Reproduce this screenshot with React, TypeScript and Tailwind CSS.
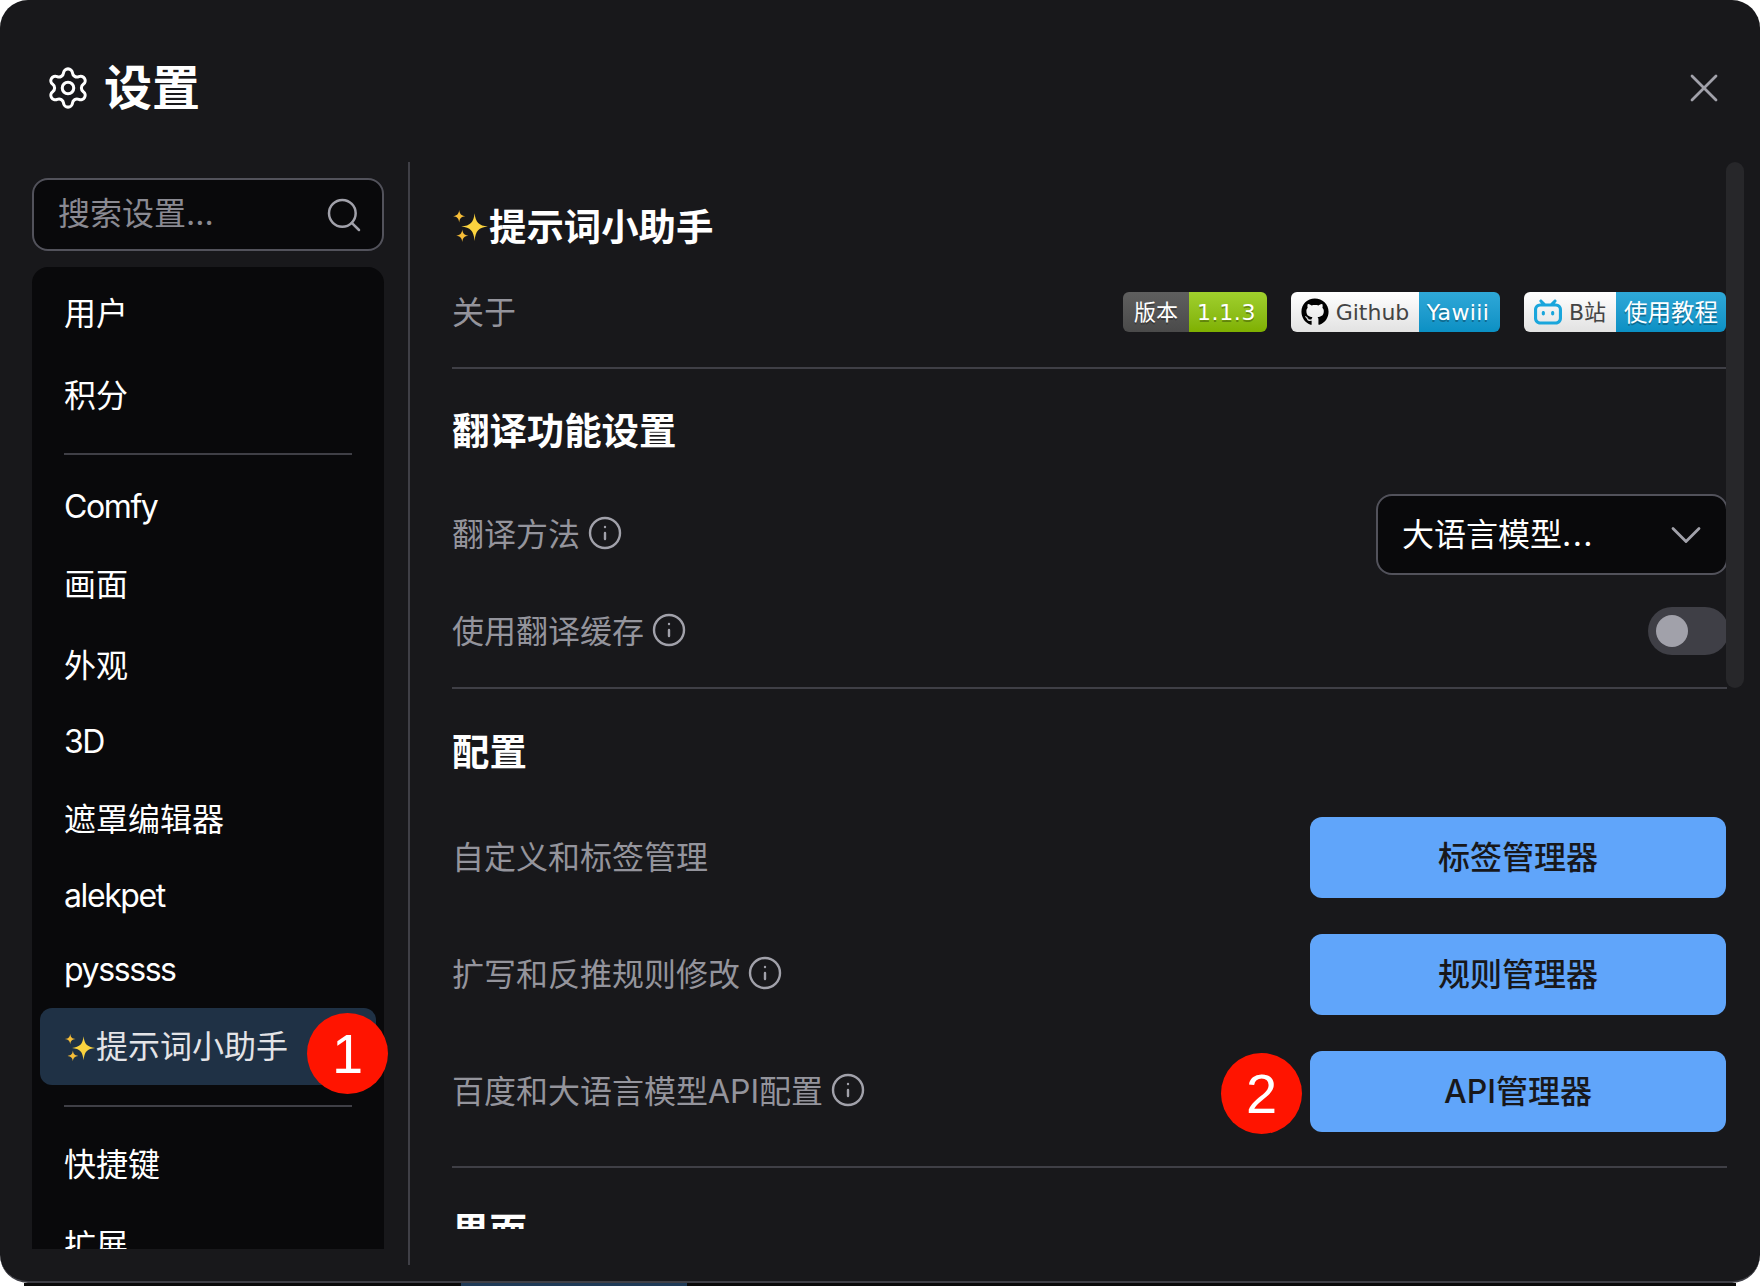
import React from 'react';
import { ChevronDown, Info, Search, Settings, X } from 'lucide-react';
import { FaGithub } from 'react-icons/fa';
import { SiBilibili } from 'react-icons/si';

const sparkles = (size: string) => (
  <svg viewBox="0 0 36 36" className={`${size} shrink-0`}>
    <path d="M22 6 C23 15 26 18 35 19 C26 20 23 23 22 33 C21 23 18 20 9 19 C18 18 21 15 22 6Z" fill="#fbd33f" />
    <path d="M7 3 C7.5 7 9 8.5 13 9 C9 9.5 7.5 11 7 15 C6.5 11 5 9.5 1 9 C5 8.5 6.5 7 7 3Z" fill="#f6bd38" />
    <path d="M10 22 C10.500 26 12 27.500 16 28 C12 28.500 10.500 30 10 34 C9.500 30 8 28.500 4 28 C8 27.500 9.500 26 10 22Z" fill="#f6bd38" />
  </svg>
);

const navItem = 'flex items-center px-8 text-[32px] text-white';
const navLatin = 'flex items-center px-8 text-[32px] tracking-[-1.4px] text-white';

const Divider = () => <div className="h-[2px] bg-[#3f3f46]" />;

const SectionTitle = ({ className, children }: { className: string; children: React.ReactNode }) => (
  <div className={`flex h-20 items-center pt-[2px] text-[37.4px] font-bold text-white ${className}`}>{children}</div>
);

const Label = ({ text, info }: { text: string; info?: boolean }) => (
  <div className="flex items-center gap-[10px] text-[32px] text-[#94949c]">
    <span>{text}</span>
    {info && <Info size={36} strokeWidth={1.6} className="-mx-[3px] -mt-[4px] text-[#a1a1aa]" />}
  </div>
);

const ActionRow = ({ label, info, button, className }: { label: string; info?: boolean; button: string; className: string }) => (
  <div className={`flex h-[81px] items-center justify-between pr-[1px] ${className}`}>
    <Label text={label} info={info} />
    <button className="h-full w-[416px] rounded-xl bg-[#60a5fa] text-[32px] font-medium text-[#18181b]">{button}</button>
  </div>
);

const shadow = '[text-shadow:0_2px_0_rgba(0,0,0,0.28)]';

const Badge = ({ left, right, leftW, rightW, icon, light, rightClass }: { left: string; right: string; leftW: string; rightW: string; icon?: React.ReactNode; light?: boolean; rightClass: string }) => (
  <div className="flex h-10 overflow-hidden rounded-md font-['DejaVu_Sans','Noto_Sans_CJK_SC',sans-serif] text-[22px]">
    <div className={`flex items-center justify-center gap-[7px] ${leftW} ${light ? 'bg-linear-to-b from-white to-[#e2e2e2] text-[#444]' : `bg-linear-to-b from-[#5f5f5f] to-[#4a4a4a] text-white ${shadow}`}`}>
      {icon}
      <span>{left}</span>
    </div>
    <div className={`flex items-center justify-center text-white ${shadow} ${rightW} ${rightClass} ${light ? 'bg-linear-to-b from-[#2ea8d8] to-[#0a90c4]' : 'bg-linear-to-b from-[#a0d02c] to-[#7fb000]'}`}>
      {right}
    </div>
  </div>
);

const Marker = ({ n, className }: { n: string; className: string }) => (
  <div className={`absolute flex h-[81px] w-[81px] items-center justify-center rounded-full bg-[#ff1400] font-['Liberation_Sans',sans-serif] text-[56px] text-white ${className}`}>
    {n}
  </div>
);

export default function App() {
  return (
    <div className="relative h-[1286px] w-[1760px] overflow-hidden bg-white font-['Inter','Noto_Sans_CJK_SC',sans-serif]">
      <div className="flex h-[1283px] flex-col rounded-[28px] border-b-2 border-[#3f3f46] bg-[#18181b]">
        <header className="flex h-[162px] shrink-0 items-center justify-between pt-[14px] pl-[45px] pr-[32px]">
          <div className="flex items-center gap-[13px]">
            <Settings size={46} strokeWidth={1.6} className="text-white" />
            <h1 className="text-[48px] font-bold text-white">设置</h1>
          </div>
          <X size={48} strokeWidth={1.4} className="text-[#a1a1aa]" />
        </header>

        <div className="flex h-[1103px] shrink-0">
          <aside className="flex w-[410px] shrink-0 flex-col border-r-2 border-[#3f3f46] pl-8 pr-6 pt-4">
            <div className="flex h-[73px] shrink-0 items-center justify-between rounded-2xl border-2 border-[#52525b] bg-[#09090b] pl-[24px] pr-[18px] text-[32px] text-[#8a8a92]">
              <span className="-mt-[2px]">搜索设置...</span>
              <Search size={40} strokeWidth={1.5} className="text-[#a1a1aa]" />
            </div>
            <nav className="mt-4 mb-4 h-[982px] shrink-0 overflow-hidden rounded-t-2xl bg-[#09090b] pt-[6px]">
              <div className={`${navItem} h-[82px]`}>用户</div>
              <div className={`${navItem} h-[82px]`}>积分</div>
              <div className="mx-8 mt-4 h-[2px] bg-[#3f3f46]" />
              <div className={`${navLatin} mt-[15px] h-[74px]`}>Comfy</div>
              <div className={`${navItem} h-[82px]`}>画面</div>
              <div className={`${navItem} h-20`}>外观</div>
              <div className={`${navLatin} h-[72px]`}>3D</div>
              <div className={`${navItem} mt-[1px] h-[82px]`}>遮罩编辑器</div>
              <div className={`${navLatin} h-[70px]`}>alekpet</div>
              <div className={`${navLatin} h-[77px]`}>pysssss</div>
              <div className="mx-2 flex h-[77px] items-center rounded-xl bg-[#1f3145] pl-6 text-[32px] text-[#e4e4e7]">
                {sparkles('h-8 w-8')}
                <span>提示词小助手</span>
              </div>
              <div className="mx-8 mt-5 h-[2px] bg-[#3f3f46]" />
              <div className={`${navItem} mt-[17px] h-[82px]`}>快捷键</div>
              <div className={`${navItem} h-[80px]`}>扩展</div>
            </nav>
          </aside>

          <main className="ml-[42px] h-[1067px] w-[1275px] overflow-hidden">
            <SectionTitle className="mt-5 h-[90px]">
              {sparkles('-mt-[6px] h-[37px] w-[37px]')}
              <span>提示词小助手</span>
            </SectionTitle>
            <div className="flex h-20 items-center justify-between pt-[2px] pr-[1px]">
              <Label text="关于" />
              <div className="-mt-[2px] flex items-center gap-6">
                <Badge left="版本" right="1.1.3" leftW="w-[66px]" rightW="w-[78px]" rightClass="pr-[3px] tracking-[0.6px]" />
                <Badge light left="Github" right="Yawiii" leftW="w-[128px]" rightW="w-[81px]" rightClass="pr-[3px] tracking-[0.4px]" icon={<FaGithub size={28} className="text-black" />} />
                <Badge light left="B站" right="使用教程" leftW="w-[92px]" rightW="w-[110px]" rightClass="pt-[3px] text-[23.500px]" icon={<SiBilibili size={28} className="text-[#1aa6dc]" />} />
              </div>
            </div>
            <div className="mt-[15px]"><Divider /></div>

            <SectionTitle className="mt-[22px]">翻译功能设置</SectionTitle>
            <div className="mt-[23px] flex h-[81px] items-center justify-between">
              <Label text="翻译方法" info />
              <div className="-mr-[1px] flex h-full w-[352px] items-center justify-between rounded-2xl border-2 border-[#52525b] bg-[#09090b] pl-[24px] pr-[14px] text-[32px] text-white">
                <span>大语言模型<span className="tracking-[1.4px]">...</span></span>
                <ChevronDown size={52} strokeWidth={1.3} className="text-[#a1a1aa]" />
              </div>
            </div>
            <div className="mt-4 flex h-20 items-center justify-between pt-[2px]">
              <Label text="使用翻译缓存" info />
              <div className="-mt-[2px] -mr-[2px] flex h-12 w-[81px] items-center rounded-full bg-[#3f3f46] pl-2">
                <div className="h-8 w-8 rounded-full bg-[#a1a1aa]" />
              </div>
            </div>
            <div className="mt-4"><Divider /></div>

            <SectionTitle className="mt-[23px]">配置</SectionTitle>
            <ActionRow className="mt-[25px]" label="自定义和标签管理" button="标签管理器" />
            <ActionRow className="mt-9" label="扩写和反推规则修改" info button="规则管理器" />
            <ActionRow className="mt-9" label="百度和大语言模型API配置" info button="API管理器" />
            <div className="mt-[34px]"><Divider /></div>

            <SectionTitle className="mt-[23px]">界面</SectionTitle>
          </main>
        </div>
      </div>

      <div className="mx-6 flex h-[3px] bg-[#0a0a0a]">
        <div className="ml-[437px] w-[226px] bg-[#1f3a57]" />
      </div>

      <div className="absolute left-[1726px] top-[162px] h-[526px] w-[18px] rounded-full bg-[#27272a]" />
      <Marker n="1" className="left-[307px] top-[1013px]" />
      <Marker n="2" className="left-[1221px] top-[1053px]" />
    </div>
  );
}
